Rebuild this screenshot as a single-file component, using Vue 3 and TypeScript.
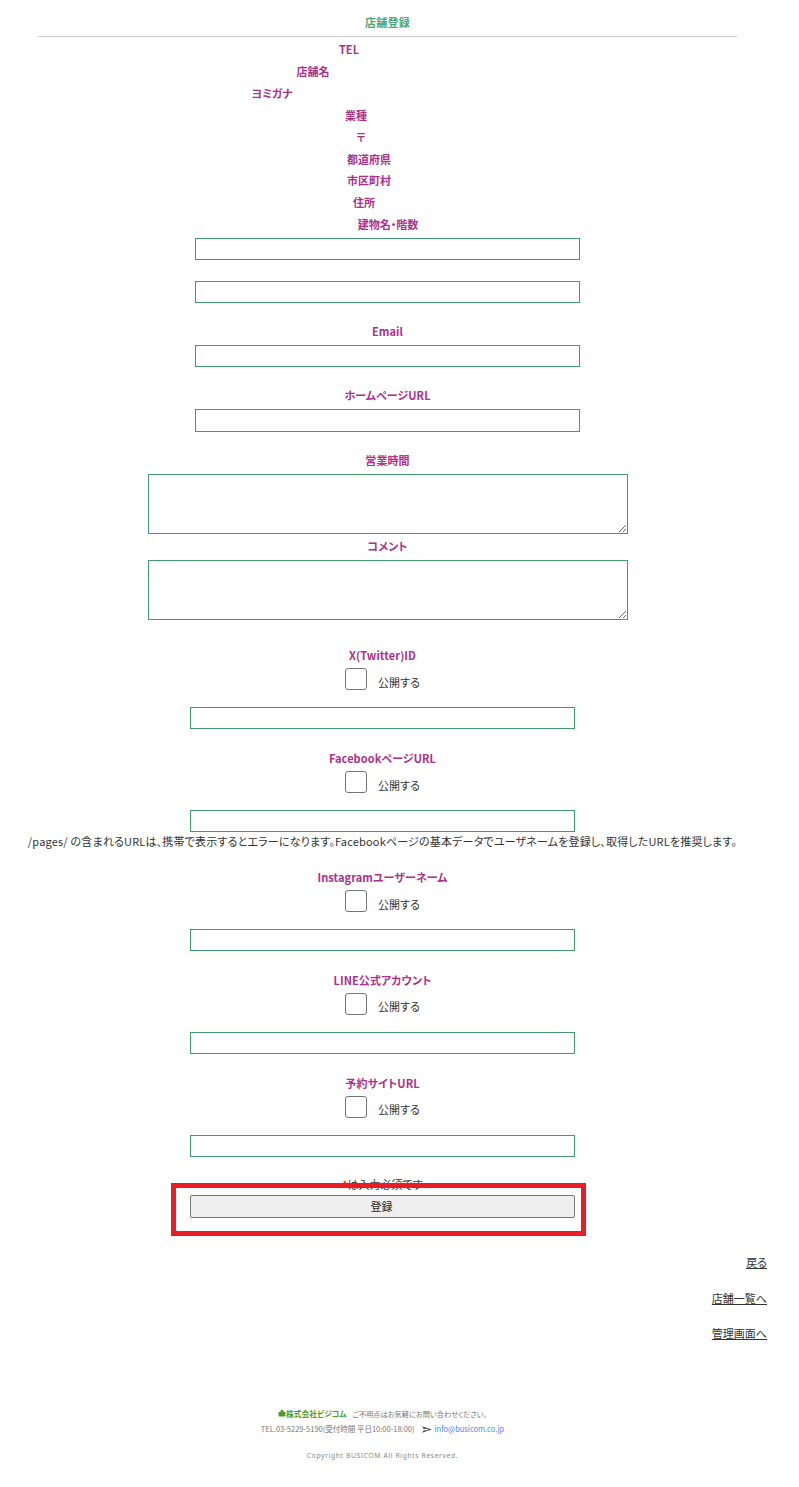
<script setup lang="ts">
interface TopLabel { text: string; center: number }
const topLabels: TopLabel[] = [
  { text: 'TEL', center: 349 },
  { text: '店舗名', center: 313 },
  { text: 'ヨミガナ', center: 272 },
  { text: '業種', center: 356 },
  { text: '〒', center: 361 },
  { text: '都道府県', center: 369 },
  { text: '市区町村', center: 369 },
  { text: '住所', center: 364 },
  { text: '建物名・階数', center: 388 },
]
const social = [
  { label: 'X(Twitter)ID', note: '' },
  { label: 'FacebookページURL', note: '/pages/ の含まれるURLは、携帯で表示するとエラーになります。Facebookページの基本データでユーザネームを登録し、取得したURLを推奨します。' },
  { label: 'Instagramユーザーネーム', note: '' },
  { label: 'LINE公式アカウント', note: '' },
  { label: '予約サイトURL', note: '' },
]
</script>

<template>
  <div class="page">
    <h1 class="title">店舗登録</h1>
    <hr class="rule" />

    <div class="top-labels">
      <div v-for="l in topLabels" :key="l.text" class="top-label" :style="{ marginLeft: l.center + 'px' }">{{ l.text }}</div>
    </div>

    <section class="main">
      <input class="field first" type="text" />
      <input class="field second" type="text" />
      <label class="label email">Email</label>
      <input class="field" type="text" />
      <label class="label home">ホームページURL</label>
      <input class="field" type="text" />
      <label class="label hours">営業時間</label>
      <textarea class="area"></textarea>
      <label class="label comment">コメント</label>
      <textarea class="area"></textarea>
    </section>

    <section class="socials">
      <div v-for="s in social" :key="s.label" class="social">
        <label class="label">{{ s.label }}</label>
        <div class="publish">
          <span class="check"></span>
          <span class="publish-text">公開する</span>
        </div>
        <input class="field wide" type="text" />
        <p v-if="s.note" class="note">{{ s.note }}</p>
      </div>
    </section>

    <section class="submit">
      <p class="required"><span class="star">*</span>は入力必須です</p>
      <button class="btn" type="button">登録</button>
      <div class="highlight"></div>
    </section>

    <nav class="links">
      <a>戻る</a>
      <a>店舗一覧へ</a>
      <a>管理画面へ</a>
    </nav>

    <footer class="footer">
      <p class="f1">
        <svg class="shop" viewBox="0 0 10 10" width="8" height="8"><path d="M3.2 3.6V1.2h3.6v2.4H9L10 6H9.2v3.4H.8V6H0l1-2.4z" fill="#4d9a2a" /></svg>
        <b class="company">株式会社ビジコム</b>
        <span class="ask">ご不明点はお気軽にお問い合わせください。</span>
      </p>
      <p class="f2">
        <span class="tel">TEL.03-5229-5190(受付時間 平日10:00-18:00)</span>
        <svg class="plane" viewBox="0 0 12 8" width="10" height="7"><path d="M0 0l12 4L0 8l2-3h5V3.4H2z" fill="#555" /></svg>
        <span class="mail">info@busicom.co.jp</span>
      </p>
      <p class="copy">Copyright BUSICOM All Rights Reserved.</p>
    </footer>
  </div>
</template>

<style>
html, body { margin: 0; background: #fff; }
</style>

<style scoped>
.page {
  width: 799px;
  height: 1487px;
  position: relative;
  overflow: hidden;
  font-family: "Noto Sans CJK JP", "Noto Sans", sans-serif;
  font-feature-settings: "palt";
  font-size: 11px;
  color: #333;
}
.title {
  margin: 0;
  padding-top: 13px;
  height: 18px;
  line-height: 18px;
  text-align: center;
  width: 775px;
  font-size: 11px;
  letter-spacing: 0.3px;
  font-weight: 700;
  color: #4aa575;
}
.rule {
  margin: 5px 0 0 38px;
  width: 699px;
  height: 1px;
  border: 0;
  background: #ccc;
}
.top-labels {
  margin-top: 1px;
  height: 200px;
  display: flex;
  flex-direction: column;
}
.top-label {
  width: 0;
  height: 21.92px;
  line-height: 22px;
  display: flex;
  justify-content: center;
  white-space: nowrap;
  font-weight: 700;
  color: #ad3089;
}
.main {
  width: 775px;
  display: flex;
  flex-direction: column;
  align-items: center;
}
.label {
  display: block;
  height: 18px;
  line-height: 18px;
  font-weight: 700;
  letter-spacing: 0.08px;
  color: #ad3089;
  text-align: center;
  white-space: nowrap;
}
.field {
  display: block;
  box-sizing: border-box;
  width: 385px;
  height: 22.4px;
  margin: 0;
  padding: 0;
  border: 1px solid #419c6d;
  border-radius: 0;
  background: #fff;
  outline: none;
}
.field.second { margin-top: 20.4px; }
.email, .home { margin-top: 18.8px; margin-bottom: 5px; }
.hours { margin-top: 19px; margin-bottom: 5px; }
.comment { margin-top: 3px; margin-bottom: 5px; }
.area {
  display: block;
  box-sizing: border-box;
  width: 480px;
  height: 60px;
  margin: 0;
  padding: 0;
  border: 1px solid #419c6d;
  border-radius: 0;
  background: #fff;
  outline: none;
}
.socials {
  width: 765px;
  margin-top: 26.4px;
  display: flex;
  flex-direction: column;
}
.social {
  display: flex;
  flex-direction: column;
  align-items: center;
  margin-bottom: 19.5px;
}
.publish {
  display: flex;
  align-items: center;
  height: 22px;
  margin-top: 4px;
}
.check {
  box-sizing: border-box;
  width: 22px;
  height: 22px;
  border: 1px solid #767676;
  border-radius: 3px;
  background: #fff;
}
.publish-text {
  margin-left: 11px;
  margin-top: 5.6px;
  line-height: 18px;
}
.social .field { margin-top: 17px; }
.note {
  margin: 0 0 -2px;
  width: 765px;
  height: 18px;
  line-height: 18px;
  text-align: center;
  white-space: nowrap;
  letter-spacing: 0.18px;
}
.submit {
  width: 765px;
  display: flex;
  flex-direction: column;
  align-items: center;
  position: relative;
  margin-top: -1.7px;
}
.required {
  margin: 0;
  height: 20px;
  line-height: 18px;
  color: #333;
}
.star { color: #ed1c24; }
.btn {
  box-sizing: border-box;
  width: 385px;
  height: 23px;
  padding: 0 2px 0 0;
  border: 1px solid #767676;
  border-radius: 2px;
  background: #efefef;
  color: #222;
  font: inherit;
  line-height: 20px;
}
.highlight {
  position: absolute;
  left: 171px;
  top: 8px;
  width: 415px;
  height: 53px;
  box-sizing: border-box;
  border: 5px solid #ed1c24;
}
.links {
  margin-top: 35.6px;
  display: flex;
  flex-direction: column;
  align-items: flex-end;
  width: 767px;
  gap: 17.5px;
}
.links a {
  line-height: 18px;
  text-decoration: underline;
  color: #333;
}
.footer {
  width: 765px;
  margin-top: 65px;
  text-align: center;
  color: #777;
}
.footer p { margin: 0; white-space: nowrap; }
.f1 { height: 15px; line-height: 14px; font-size: 7.2px; }
.company { color: #4d9a2a; font-size: 7.8px; margin-right: 6px; }
.f2 { height: 14px; line-height: 14px; font-size: 7.5px; }
.mail { color: #4a86e8; }
.plane { margin: 0 3px -1px 7px; }
.copy {
  margin-top: 12.5px !important;
  height: 14px;
  line-height: 14px;
  font-size: 6.8px;
  letter-spacing: 0.6px;
  color: #888;
  font-family: "Noto Sans", sans-serif;
}
</style>
